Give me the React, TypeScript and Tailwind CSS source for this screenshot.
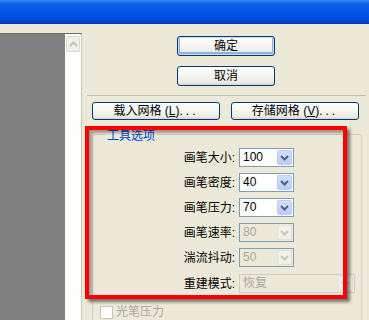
import type { ReactNode } from "react";

// XP-style dialog fragment: liquify tool options with a red call-out box.

function Chevron({ disabled }: { disabled?: boolean }) {
  return (
    <svg width="9" height="6" viewBox="0 0 9 6" className="block">
      <polyline
        points="1,1 4.5,4.5 8,1"
        fill="none"
        stroke={disabled ? "#C9C7BA" : "#4D6185"}
        strokeWidth="2"
      />
    </svg>
  );
}

function XpButton({
  children,
  isDefault,
  className,
}: {
  children: ReactNode;
  isDefault?: boolean;
  className: string;
}) {
  return (
    <div
      className={`flex items-center justify-center rounded-[3px] border border-[#003C74] bg-[linear-gradient(180deg,#FFFFFF_0%,#F6F6F2_45%,#ECEBE6_85%,#D8D2C6_100%)] leading-none ${
        isDefault
          ? "shadow-[inset_0_0_0_1px_#C6DBF9,inset_0_-1px_0_2px_#8BB0E8]"
          : ""
      } ${className}`}
    >
      {children}
    </div>
  );
}

function Combo({
  value,
  disabled,
  wide,
}: {
  value: string;
  disabled?: boolean;
  wide?: boolean;
}) {
  return (
    <div
      className={`flex h-[19px] border ${wide ? "w-[116px] border-[#CFCDC0]" : "w-[55px] border-[#7F9DB9]"} ${
        disabled ? "bg-[#ECE9D8] text-[#ACA899]" : "bg-white text-black"
      }`}
    >
      <span className="flex-1 pl-[3px] leading-[17px]">{value}</span>
      <span
        className={`m-px flex w-[15px] items-center justify-center rounded-[2px] border ${
          disabled
            ? "border-[#E3E2DA] bg-[#F1F0EA]"
            : "border-[#BACCF5] bg-[linear-gradient(180deg,#D2DEFD_0%,#BBCDF8_100%)]"
        }`}
      >
        <Chevron disabled={disabled} />
      </span>
    </div>
  );
}

const ROWS = [
  { label: "画笔大小", value: "100" },
  { label: "画笔密度", value: "40" },
  { label: "画笔压力", value: "70" },
  { label: "画笔速率", value: "80", disabled: true },
  { label: "湍流抖动", value: "50", disabled: true },
];

export default function App() {
  return (
    <div className="relative h-[320px] w-[369px] overflow-hidden bg-[#ECE9D8] font-['Liberation_Sans','Noto_Sans_CJK_SC',sans-serif] text-[12px] text-black">
      {/* title bar */}
      <div className="h-[24px] border-b border-[#0038B4] bg-[linear-gradient(180deg,#3A88F7_0%,#0A5EEA_18%,#0055E5_55%,#004DDC_85%,#0042C8_100%)]" />

      <div className="flex">
        {/* preview pane + scrollbar */}
        <div className="mt-[9px] flex h-[287px] w-[82px] border-t border-[#6E6D67]">
          <div className="w-[65px] bg-[#808080]" />
          <div className="w-[16px] bg-[#FEFEFC] pt-[2px]">
            <div className="mx-px flex h-[16px] w-[14px] items-center justify-center rounded-[2px] border border-[#DAD8CF] bg-[#F1F0EA]">
              <svg width="9" height="6" viewBox="0 0 9 6" className="block">
                <polyline
                  points="1,5 4.5,1.5 8,5"
                  fill="none"
                  stroke="#C3C1B8"
                  strokeWidth="2"
                />
              </svg>
            </div>
          </div>
          <div className="w-px bg-[#C9C6B8]" />
        </div>

        {/* controls */}
        <div className="flex min-w-0 flex-1 flex-col">
          <XpButton isDefault className="ml-[95px] mt-[12px] h-[20px] w-[98px]">
            确定
          </XpButton>
          <XpButton className="ml-[95px] mt-[10px] h-[20px] w-[98px]">
            取消
          </XpButton>

          <div className="ml-[5px] mr-[3px] mt-[9px] h-px bg-[#C5C2B2]" />

          <div className="ml-[10px] mt-[6px] flex gap-[11px]">
            <XpButton className="h-[18px] w-[128px]">
              载入网格 (<span className="underline">L</span>)
              <span className="tracking-[3px]">...</span>
            </XpButton>
            <XpButton className="h-[18px] w-[128px]">
              存储网格 (<span className="underline">V</span>)
              <span className="tracking-[3px]">...</span>
            </XpButton>
          </div>

          <fieldset className="ml-[10px] mt-[4px] h-[240px] w-[270px] rounded-[3px] border border-[#D0D0BF]">
            <legend className="ml-[12px] px-[2px] pt-[4px] leading-[16px] text-[#0046D5]">
              工具选项
            </legend>
            <div className="mt-[4px] flex flex-col gap-[6px]">
              {ROWS.map((r) => (
                <div key={r.label} className="flex items-center">
                  <span className="w-[142px] text-right">{r.label}:</span>
                  <span className="ml-[4px]">
                    <Combo value={r.value} disabled={r.disabled} />
                  </span>
                </div>
              ))}
              <div className="mt-px flex items-center">
                <span className="w-[142px] text-right">重建模式:</span>
                <span className="ml-[4px]">
                  <Combo value="恢复" disabled wide />
                </span>
              </div>
            </div>
            <div className="ml-[7px] mt-[10px] flex items-center gap-[3px] text-[#ACA899]">
              <span className="h-[13px] w-[13px] border border-[#CAC8BB] bg-white" />
              <span>光笔压力</span>
            </div>
          </fieldset>
        </div>
      </div>

      {/* red call-out */}
      <div className="pointer-events-none absolute left-[85px] top-[126px] h-[173px] w-[262px] border-4 border-[#FF0000] shadow-[3px_3px_3px_rgba(0,0,0,0.5),inset_3px_3px_3px_rgba(0,0,0,0.35)]" />
    </div>
  );
}
